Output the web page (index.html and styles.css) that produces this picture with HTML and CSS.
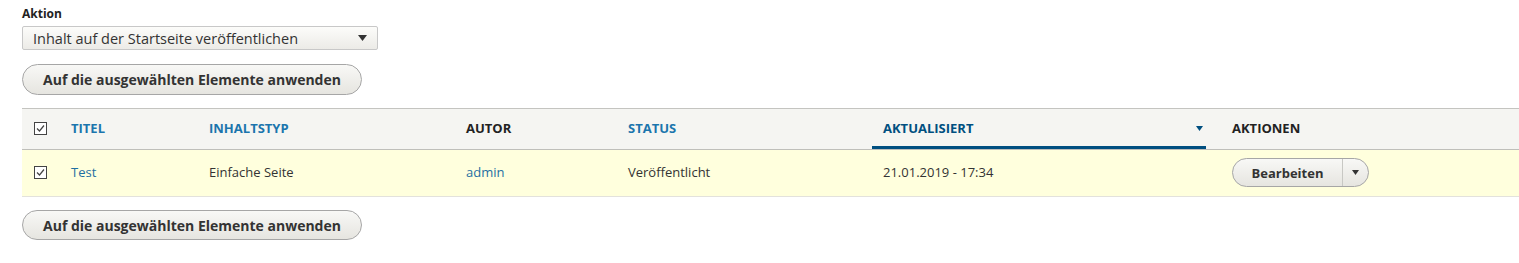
FILE: index.html
```html
<!DOCTYPE html>
<html lang="de">
<head>
<meta charset="utf-8">
<title>Inhalt</title>
<link rel="stylesheet" href="styles.css">
</head>
<body>
<div class="page">
  <div class="form-item">
    <label class="label">Aktion</label>
    <div class="select">
      <span class="select-text">Inhalt auf der Startseite veröffentlichen</span>
      <svg class="select-arrow" width="9" height="6" viewBox="0 0 9 6"><path d="M0 0h9L4.5 6z" fill="#333"/></svg>
    </div>
  </div>
  <button class="btn" type="button">Auf die ausgewählten Elemente anwenden</button>

  <table class="tbl">
    <colgroup>
      <col class="c-check">
      <col class="c-title">
      <col class="c-type">
      <col class="c-author">
      <col class="c-status">
      <col class="c-updated">
      <col>
    </colgroup>
    <thead>
      <tr>
        <th class="cell-check">
          <svg class="cb" width="13" height="13" viewBox="0 0 13 13"><rect x="0.5" y="0.5" width="12" height="12" fill="#fff" stroke="#444"/><path d="M3 6.5l2.5 2.5L10 3.5" fill="none" stroke="#444" stroke-width="1.2"/></svg>
        </th>
        <th><a class="th-link">Titel</a></th>
        <th><a class="th-link">Inhaltstyp</a></th>
        <th class="th-plain">Autor</th>
        <th><a class="th-link">Status</a></th>
        <th class="is-active"><a class="th-link active">Aktualisiert<svg class="sort" width="7" height="5" viewBox="0 0 7 5"><path d="M0 0h7L3.5 5z" fill="#004f80"/></svg></a></th>
        <th class="th-plain">Aktionen</th>
      </tr>
    </thead>
    <tbody>
      <tr class="selected">
        <td class="cell-check">
          <svg class="cb" width="13" height="13" viewBox="0 0 13 13"><rect x="0.5" y="0.5" width="12" height="12" fill="#fff" stroke="#444"/><path d="M3 6.5l2.5 2.5L10 3.5" fill="none" stroke="#444" stroke-width="1.2"/></svg>
        </td>
        <td><a class="link">Test</a></td>
        <td>Einfache Seite</td>
        <td><a class="link">admin</a></td>
        <td>Veröffentlicht</td>
        <td>21.01.2019 - 17:34</td>
        <td>
          <div class="dropbutton">
            <span class="db-main">Bearbeiten</span>
            <span class="db-toggle"><svg width="7" height="5" viewBox="0 0 7 5"><path d="M0 0h7L3.5 5z" fill="#333"/></svg></span>
          </div>
        </td>
      </tr>
    </tbody>
  </table>

  <button class="btn btn-bottom" type="button">Auf die ausgewählten Elemente anwenden</button>
</div>
</body>
</html>
```

FILE: styles.css
```css
html, body {
  margin: 0;
  padding: 0;
  background: #fff;
}
body {
  font-family: "Open Sans", "Noto Sans", "DejaVu Sans", sans-serif;
  color: #222;
  font-size: 13px;
}
.page {
  padding: 6px 0 0 22px;
}
.form-item {
  display: flex;
  flex-direction: column;
  align-items: flex-start;
}
.label {
  font-weight: bold;
  font-size: 12px;
  line-height: 15px;
  color: #222;
  margin-bottom: 5px;
}
.select {
  box-sizing: border-box;
  width: 356px;
  height: 24px;
  border: 1px solid #c8c8c8;
  border-radius: 2px;
  background: linear-gradient(#fcfcfa, #ecebe7);
  display: flex;
  align-items: center;
  justify-content: space-between;
  padding: 0 10px 0 10px;
  font-size: 14.5px;
  color: #333;
}
.select-arrow {
  display: block;
}
.btn {
  box-sizing: border-box;
  display: block;
  margin-top: 14px;
  width: 340px;
  height: 31px;
  border: 1px solid #a6a6a6;
  border-radius: 20px;
  background: linear-gradient(#f8f8f6, #e6e5e0);
  font-family: inherit;
  font-weight: bold;
  font-size: 14px;
  color: #333;
  padding: 0;
  text-align: center;
}
.btn-bottom {
  margin-top: 13px;
  height: 30px;
}
.tbl {
  margin-top: 13px;
  width: 100%;
  table-layout: fixed;
  border-collapse: collapse;
}
.c-check { width: 38px; }
.c-title { width: 138px; }
.c-type { width: 257px; }
.c-author { width: 162px; }
.c-status { width: 255px; }
.c-updated { width: 349px; }
.tbl thead tr {
  background: #f5f5f2;
  border-top: 1px solid #c4c4c0;
  border-bottom: 1px solid #bfbfba;
}
.tbl th {
  height: 38px;
  padding: 0 11px 2px 11px;
  text-align: left;
  font-size: 13px;
  font-weight: bold;
  text-transform: uppercase;
  letter-spacing: 0;
  vertical-align: middle;
}
.tbl th.cell-check, .tbl td.cell-check {
  padding: 0 0 2px 12px;
}
.cb {
  display: block;
}
.th-link {
  color: #1b75ad;
}
.th-plain {
  color: #222;
}
.tbl th.is-active {
  padding: 0 15px 0 0;
  vertical-align: bottom;
}
.th-link.active {
  box-sizing: border-box;
  display: flex;
  align-items: center;
  justify-content: space-between;
  height: 40px;
  padding: 0 3px 0 11px;
  color: #004f80;
  border-bottom: 3px solid #004f80;
  padding-top: 1px;
}
.sort {
  display: block;
}
.tbl tbody tr.selected {
  background: #ffffdd;
  border-bottom: 1px solid #e3e2dc;
}
.tbl td {
  height: 44px;
  padding: 0 11px 2px 11px;
  font-size: 13px;
  color: #333;
  vertical-align: middle;
}
.link {
  color: #1f6fa2;
}
.dropbutton {
  box-sizing: border-box;
  display: inline-flex;
  height: 29px;
  border: 1px solid #a6a6a6;
  border-radius: 20px;
  background: linear-gradient(#f8f8f6, #e6e5e0);
  margin-top: 1px;
}
.db-main {
  display: flex;
  align-items: center;
  justify-content: center;
  width: 109px;
  font-weight: bold;
  font-size: 13px;
  font-stretch: 92%;
  color: #333;
  border-right: 1px solid #c8c8c4;
}
.db-toggle {
  display: flex;
  align-items: center;
  justify-content: center;
  width: 25px;
}
```
